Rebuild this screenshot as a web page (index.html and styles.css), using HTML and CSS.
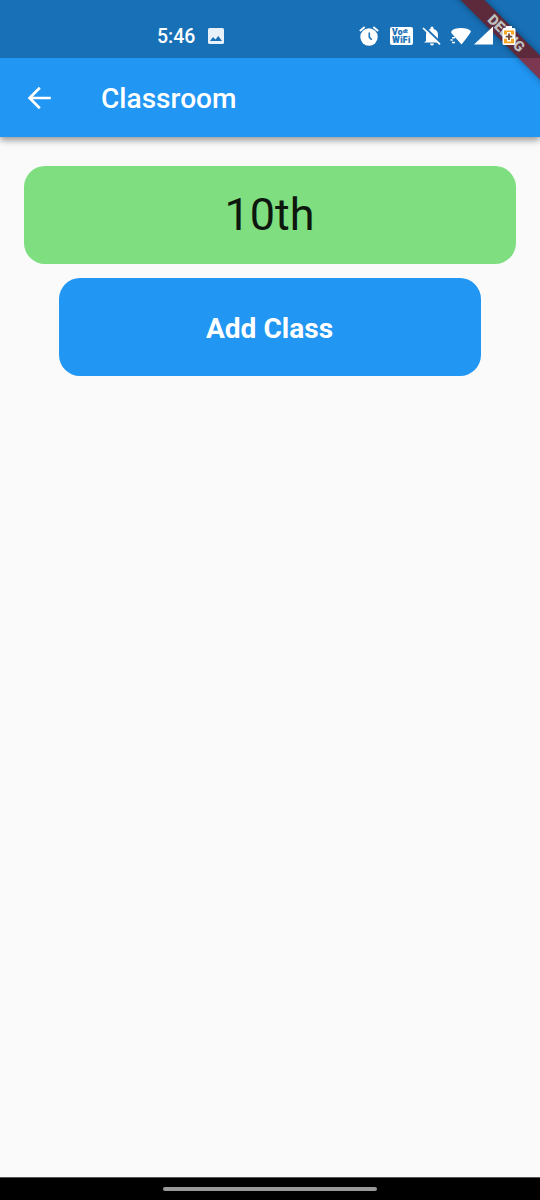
FILE: index.html
```html
<!DOCTYPE html>
<html lang="en">
<head>
<meta charset="utf-8">
<title>Classroom</title>
<link rel="stylesheet" href="styles.css">
</head>
<body>
<div class="screen">
  <div class="top">
    <div class="status">
      <span class="time">5:46</span>
      <svg class="photo" width="16" height="16" viewBox="0 0 16 16"><path fill="#e8f1f9" fill-rule="evenodd" d="M1.500 0h13Q16 0 16 1.500v13q0 1.500-1.500 1.500h-13Q0 16 0 14.500v-13Q0 0 1.500 0zM2 13h12l-3.700-5L7.500 11.600 5 9z"/></svg>
      <div class="icons">
        <svg width="20" height="20" viewBox="0 0 20 20"><circle cx="10" cy="11" r="8.700" fill="#fff"/><path d="M.800 5 5.700 1M19.200 5 14.300 1" stroke="#fff" stroke-width="1.800"/><path d="M10.300 6.500v4.700l2.500 2.600" fill="none" stroke="#1970b6" stroke-width="1.600"/></svg>
        <div class="vowifi"><div class="vo">Vo<sup>dt</sup></div><div>WiFi</div></div>
        <svg width="20" height="20" viewBox="0 0 20 20"><path fill="#fff" d="M4 15V9q0-5 4.500-6V2a1.500 1.500 0 0 1 3 0v1Q16 4 16 9v6l2 1.500H2zM8 17.400h4a2 2 0 0 1-4 0z"/><path d="m2.300.8 17 16.400" stroke="#1970b6" stroke-width="1.900"/><path d="m1 2 17 16.400" stroke="#fff" stroke-width="1.700"/></svg>
        <svg class="wifi" width="22" height="20" viewBox="0 0 22 20"><path fill="#fff" d="M1.300 5.200Q4 2 11 2t10 3.200Q20.700 7 11.500 18.500L8 14.500 1.300 7z"/><path stroke="#fff" stroke-width="1.500" d="M2 11.700h3M.500 14h2.200M2 16.600h3"/></svg>
        <svg class="signal" width="20" height="20" viewBox="0 0 20 20"><path fill="#fff" d="M19 .5v18H0z"/></svg>
        <svg class="battery" width="14" height="20" viewBox="0 0 14 20"><path fill="#fff" d="M4 0h6v2h2q1.500 0 1.500 1.500v14q0 1.500-1.500 1.500H2Q.5 19 .5 17.500v-14Q.5 2 2 2h2z"/><path fill="#f6a623" d="M2 4.500h10v12.800H2z"/><path fill="#fff" d="M5 6h4v2.500h4v4.300H9v2.700H5v-2.700H1V8.500h4z"/><path d="M7 7.500v6.500M3.700 10.700h6.600" stroke="#6e4a3c" stroke-width="1.800"/></svg>
      </div>
    </div>
    <header class="appbar">
      <svg class="back" width="24" height="24" viewBox="0 0 24 24"><path d="M23.800 12H3M12.800 1.800 2.600 12l10.200 10.200" fill="none" stroke="#fff" stroke-width="2.700"/></svg>
      <h1>Classroom</h1>
    </header>
    <div class="ribbon-clip"><div class="ribbon">DEBUG</div></div>
  </div>
  <main>
    <div class="class-card">10th</div>
    <button class="add">Add Class</button>
  </main>
  <footer><div class="handle"></div></footer>
</div>
</body>
</html>
```
FILE: styles.css
```css
* { box-sizing: border-box; }
body { margin: 0; font-family: Roboto, sans-serif; background: #fafafa; }
.screen { width: 540px; height: 1200px; display: flex; flex-direction: column; overflow: hidden; }
.top { position: relative; height: 137px; background: #2196f3; box-shadow: 0 3px 6px rgba(0,0,0,.33), 0 5px 8px rgba(0,0,0,.08); }
.status { position: relative; z-index: 2; height: 58px; background: rgba(0,0,0,.25); display: flex; align-items: center; padding: 14px 24px 0 157px; color: #fff; }
.time { font-size: 19.500px; font-weight: 500; line-height: 22px; width: 51px; padding-top: 1px; }
.icons { margin-left: auto; display: flex; align-items: center; }
.status svg { display: block; flex: none; }
.vowifi { width: 23px; height: 18px; background: #fff; border-radius: 2px; color: #1970b6; margin: 0 9px 0 11px; font-size: 8.500px; font-weight: 900; line-height: 8px; padding-top: 1px; text-align: center; letter-spacing: .4px; -webkit-text-stroke: .2px #1970b6; }
.vo { text-align: left; padding-left: 2px; }
.vowifi sup { font-size: 5px; line-height: 0; letter-spacing: 0; vertical-align: 2px; }
.wifi { margin-left: 8px; }
.signal { margin-left: 2px; }
.battery { margin-left: 8px; }
.appbar { height: 79px; display: flex; align-items: center; padding-left: 27px; }
.back { flex: none; }
h1 { margin: 3px 0 0 50px; color: #fff; font-size: 28.100px; line-height: 34px; font-weight: 500; }
.ribbon-clip { position: absolute; z-index: 1; top: 0; right: 0; width: 110px; height: 110px; overflow: hidden; }
.ribbon { position: absolute; left: 6.200px; top: 25.100px; width: 140px; height: 17px; transform: rotate(45deg); background: linear-gradient(rgba(183,28,28,.63), rgba(183,28,28,.63)), rgba(0,0,0,.3); box-shadow: 0 0 7px rgba(0,0,0,.35); color: #fff; font-size: 14.300px; font-weight: 900; line-height: 17px; text-align: center; }
main { flex: 1; display: flex; flex-direction: column; align-items: center; padding: 28.500px 24px 0; gap: 14px; }
.class-card { width: 492px; height: 98.300px; border-radius: 21px; background: #7ede80; color: #0d170d; font-size: 45px; line-height: 98px; text-align: center; text-indent: -1px; }
.add { width: 422px; height: 98.300px; border: 0; border-radius: 21px; background: #2196f3; color: #fff; font: 700 28.100px/34px Roboto, sans-serif; padding: 4px 1px 0 0; }
footer { height: 23px; background: #000; border-top: 1px solid #555; display: flex; justify-content: center; padding-top: 8.500px; }
.handle { width: 214px; height: 4.500px; border-radius: 3px; background: #999; }
```
